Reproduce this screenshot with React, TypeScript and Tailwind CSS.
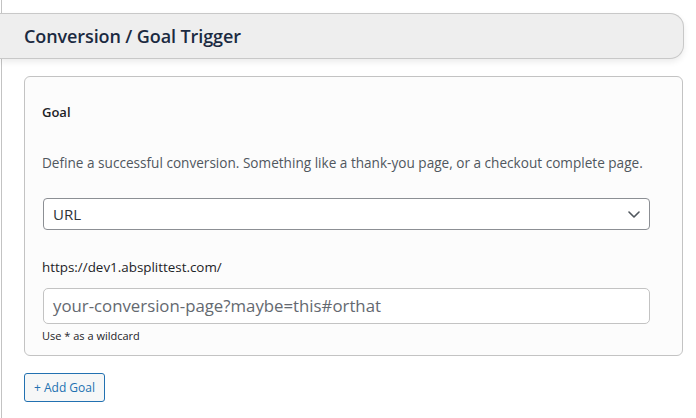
import React from 'react';

const font = { fontFamily: '"Open Sans", "Noto Sans", sans-serif' };

const ChevronDown = () => (
  <svg width="12" height="7" viewBox="0 0 12 7" fill="none" className="shrink-0">
    <path d="M1 1l5 5 5-5" stroke="#50575e" strokeWidth="1.6" strokeLinecap="round" strokeLinejoin="round" />
  </svg>
);

const App = () => {
  return (
    <div className="w-[696px] h-[418px] bg-white overflow-hidden" style={font}>
      <div className="ml-[1px] h-full border-l border-[#c3c3c3] pt-[13px]">
        {/* Section header */}
        <div className="-ml-[2px] w-[684px] h-[46px] bg-[#eeeeee] border-y border-r border-[#c8c8c8] rounded-r-[14px] shadow-[0_3px_6px_rgba(0,0,0,0.08)] flex items-center pl-[24px]">
          <h2 className="text-[18px] font-semibold text-[#1b2a41] tracking-[-0.1px]">Conversion / Goal Trigger</h2>
        </div>

        {/* Goal card */}
        <div className="ml-[22px] mt-[17px] w-[659px] h-[280px] bg-[#fcfcfc] border border-[#c3c3c3] rounded-[6px] pl-[17px] pt-[25px]">
          <h3 className="text-[13px] leading-[20px] font-semibold text-[#1d2327]">Goal</h3>
          <p className="mt-[31px] text-[13.6px] leading-[20px] text-[#50575e]">
            Define a successful conversion. Something like a thank-you page, or a checkout complete page.
          </p>
          <div className="mt-[25px] ml-[1px] w-[607px] h-[32px] border border-[#8c8f94] rounded-[4px] bg-white flex items-center justify-between pl-[9px] pr-[9px]">
            <span className="text-[15px] text-[#2c3338]">URL</span>
            <ChevronDown />
          </div>
          <p className="mt-[27px] text-[13.4px] leading-[20px] text-[#1d2327]">https://dev1.absplittest.com/</p>
          <div className="mt-[11px] ml-[1px] w-[607px] h-[36px] border border-[#c3c3c3] rounded-[5px] bg-white flex items-center pl-[9px]">
            <span className="text-[16.8px] text-[#646970]">your-conversion-page?maybe=this#orthat</span>
          </div>
          <p className="mt-[4px] text-[11px] leading-[16px] text-[#1d2327]">Use * as a wildcard</p>
        </div>

        {/* Add goal */}
        <button className="ml-[22px] mt-[17px] w-[81px] h-[29px] border border-[#2271b1] rounded-[3px] bg-[#f6f7f7] text-[12px] text-[#2271b1] flex items-center justify-center">
          + Add Goal
        </button>
      </div>
    </div>
  );
};

export default App;
